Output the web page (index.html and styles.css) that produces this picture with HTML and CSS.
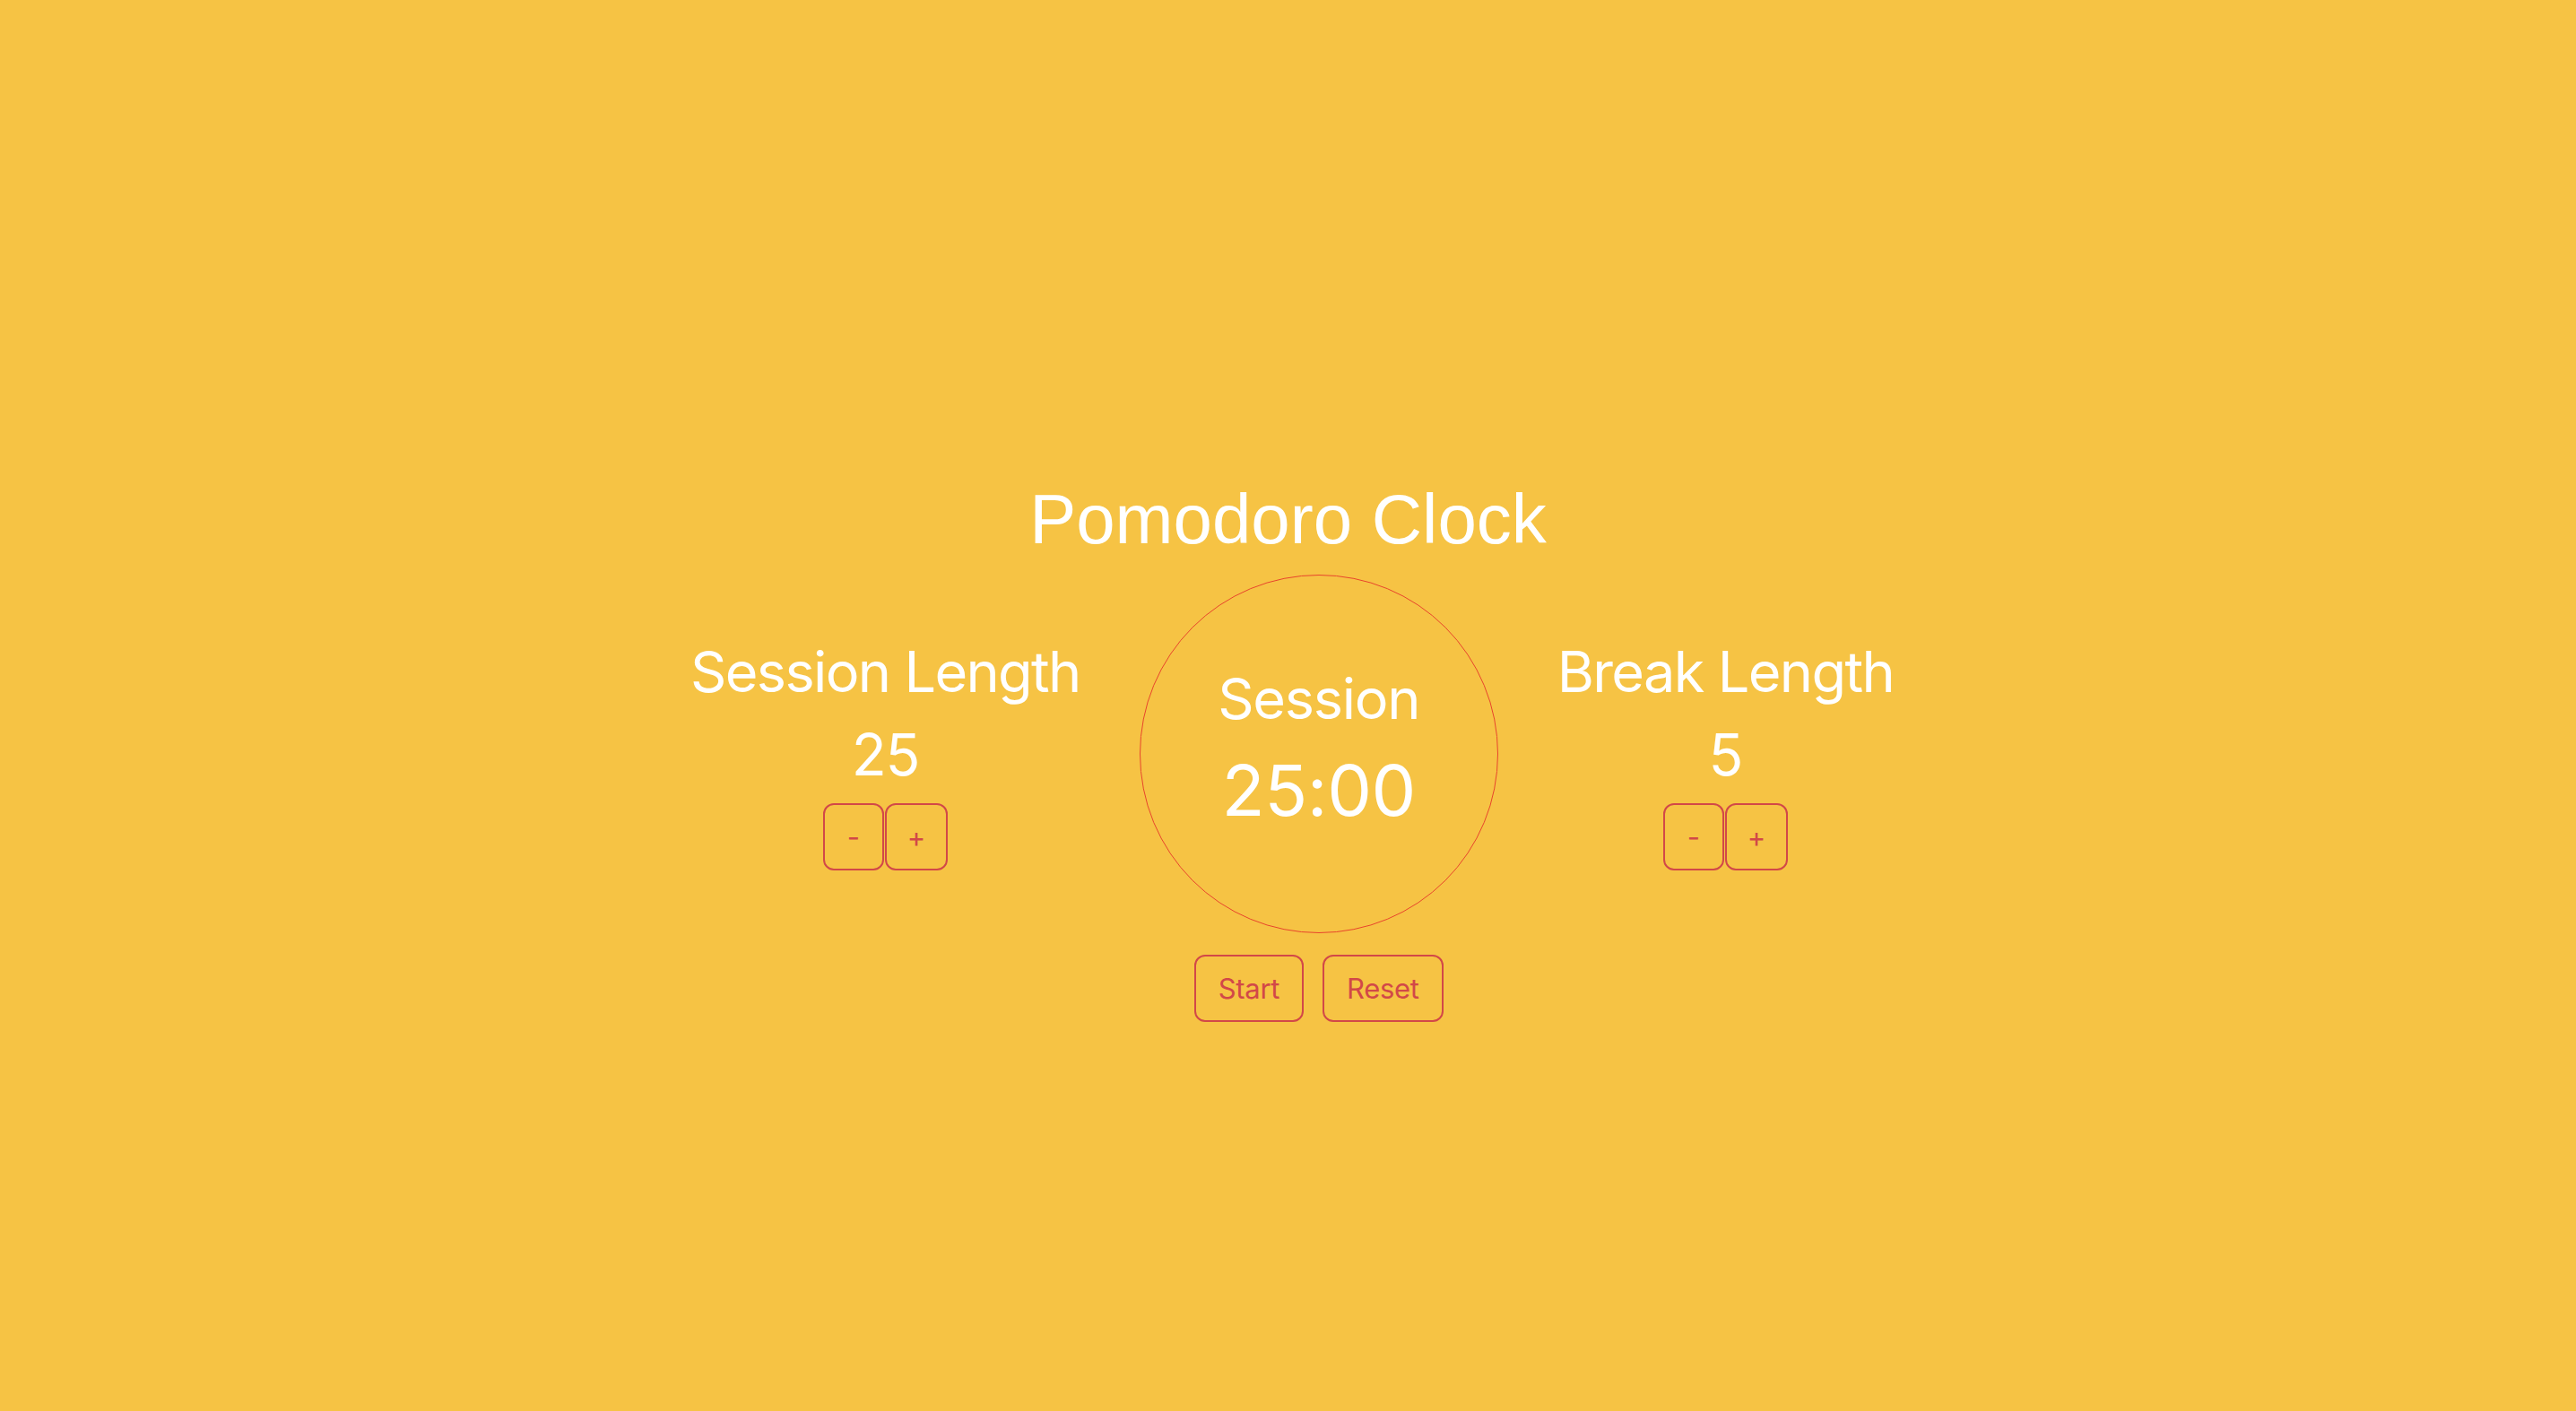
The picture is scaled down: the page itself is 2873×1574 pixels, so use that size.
FILE: index.html
```html
<!DOCTYPE html>
<html lang="en">
<head>
<meta charset="utf-8">
<title>Pomodoro Clock</title>
<link rel="stylesheet" href="styles.css">
</head>
<body>
<main class="app">
  <h1 class="title">Pomodoro Clock</h1>
  <div class="board">
    <section class="control">
      <div class="control-label">Session Length</div>
      <div class="control-value">25</div>
      <div class="stepper">
        <button class="btn">-</button>
        <button class="btn">+</button>
      </div>
    </section>
    <div class="timer">
      <div class="timer-label">Session</div>
      <div class="timer-time">25:00</div>
    </div>
    <section class="control">
      <div class="control-label">Break Length</div>
      <div class="control-value">5</div>
      <div class="stepper">
        <button class="btn">-</button>
        <button class="btn">+</button>
      </div>
    </section>
    <div class="actions">
      <button class="btn">Start</button>
      <button class="btn">Reset</button>
    </div>
  </div>
</main>
</body>
</html>
```

FILE: styles.css
```css
html, body {
  margin: 0;
  padding: 0;
}
body {
  background: #f6c344;
  min-height: 100vh;
  font-family: Inter, "Noto Sans", sans-serif;
  color: #ffffff;
}
.app {
  display: flex;
  flex-direction: column;
  align-items: center;
  padding-top: 536px;
}
.title {
  margin: 0 0 18px 0;
  font-family: "Liberation Sans", Arial, sans-serif;
  font-weight: 400;
  font-size: 78px;
  line-height: 87px;
}
.board {
  display: grid;
  grid-template-columns: auto auto auto;
  column-gap: 66px;
  row-gap: 24px;
  align-items: center;
  margin-left: 9px;
}
.control {
  display: flex;
  flex-direction: column;
  align-items: center;
  gap: 16px;
}
.control-label {
  font-size: 63px;
  line-height: 76px;
  letter-spacing: -0.026em;
}
.control-value {
  font-size: 64px;
  line-height: 77px;
  letter-spacing: -0.02em;
}
.stepper {
  display: flex;
  gap: 1px;
}
.btn {
  background: transparent;
  border: 2px solid #d24848;
  border-radius: 12px;
  color: #d24848;
  font-family: Inter, "Noto Sans", sans-serif;
  font-size: 31px;
  line-height: 37px;
  padding: 17px 25px;
  margin: 0;
  letter-spacing: -0.01em;
}
.stepper .btn + .btn {
  padding: 17px 23px;
}
.timer {
  box-sizing: border-box;
  width: 400px;
  height: 400px;
  border: 1px solid #e8452c;
  border-radius: 50%;
  display: flex;
  flex-direction: column;
  align-items: center;
  justify-content: center;
  gap: 16px;
  padding-bottom: 13px;
}
.timer-label {
  font-size: 63px;
  line-height: 76px;
  letter-spacing: -0.02em;
}
.timer-time {
  font-size: 79px;
  line-height: 96px;
  letter-spacing: -0.005em;
}
.actions {
  grid-column: 2;
  display: flex;
  justify-content: center;
  gap: 21px;
  align-self: start;
}
```
